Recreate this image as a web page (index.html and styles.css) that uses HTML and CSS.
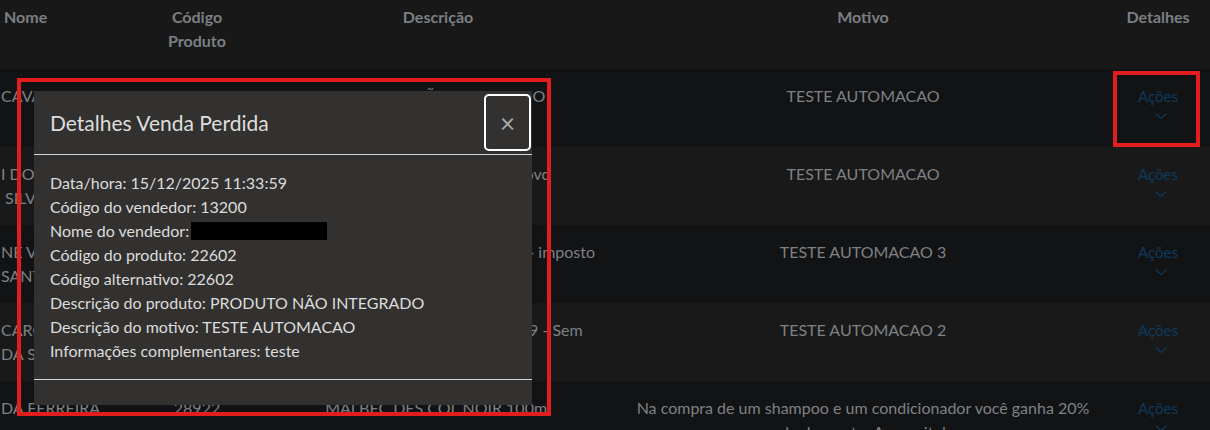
FILE: index.html
```html
<!DOCTYPE html>
<html lang="pt-BR">
<head>
<meta charset="utf-8">
<title>Vendas Perdidas</title>
<link rel="stylesheet" href="styles.css">
</head>
<body>
<table class="grid">
  <colgroup>
    <col class="c-nome"><col class="c-cod"><col class="c-desc"><col class="c-mot"><col class="c-det">
  </colgroup>
  <thead>
    <tr>
      <th class="th-nome">Nome</th>
      <th>Código<br>Produto</th>
      <th>Descrição</th>
      <th>Motivo</th>
      <th>Detalhes</th>
    </tr>
  </thead>
  <tbody>
    <tr class="odd">
      <td class="nome">CAVALHERI</td>
      <td>22602</td>
      <td>PRODUTO NÃO INTEGRADO</td>
      <td>TESTE AUTOMACAO</td>
      <td class="det"><span class="acoes">Ações<svg class="chev" viewBox="0 0 12 6" width="12" height="6"><path d="M0.5 0.5 L6 5.5 L11.5 0.5"/></svg></span></td>
    </tr>
    <tr class="even">
      <td class="nome">I DOS SANTOS<br>&nbsp;SILVA</td>
      <td>22603</td>
      <td>SHAMPOO TESTE 300ML novo</td>
      <td>TESTE AUTOMACAO</td>
      <td class="det"><span class="acoes">Ações<svg class="chev" viewBox="0 0 12 6" width="12" height="6"><path d="M0.5 0.5 L6 5.5 L11.5 0.5"/></svg></span></td>
    </tr>
    <tr class="odd">
      <td class="nome">NE VIEIRA<br>SANTOS</td>
      <td>23110</td>
      <td>PRODUTO TESTE TRIBUTADO ST - imposto</td>
      <td>TESTE AUTOMACAO 3</td>
      <td class="det"><span class="acoes">Ações<svg class="chev" viewBox="0 0 12 6" width="12" height="6"><path d="M0.5 0.5 L6 5.5 L11.5 0.5"/></svg></span></td>
    </tr>
    <tr class="even">
      <td class="nome">CAROLINA<br>DA SILVA</td>
      <td>24019</td>
      <td>KIT PROMOCIONAL VERÃO 2019 - Sem disponibilidade</td>
      <td>TESTE AUTOMACAO 2</td>
      <td class="det"><span class="acoes">Ações<svg class="chev" viewBox="0 0 12 6" width="12" height="6"><path d="M0.5 0.5 L6 5.5 L11.5 0.5"/></svg></span></td>
    </tr>
    <tr class="odd">
      <td class="nome">DA FERREIRA</td>
      <td>28922</td>
      <td>MALBEC DES COL NOIR 100ml</td>
      <td>Na compra de um shampoo e um condicionador você ganha 20% de desconto. Aproveite!</td>
      <td class="det"><span class="acoes">Ações<svg class="chev" viewBox="0 0 12 6" width="12" height="6"><path d="M0.5 0.5 L6 5.5 L11.5 0.5"/></svg></span></td>
    </tr>
  </tbody>
</table>

<div class="modal">
  <div class="modal-head">
    <h2 class="modal-title">Detalhes Venda Perdida</h2>
    <button class="close" type="button" aria-label="Fechar">×</button>
  </div>
  <div class="modal-body">
    <div>Data/hora: 15/12/2025 11:33:59</div>
    <div>Código do vendedor: 13200</div>
    <div>Nome do vendedor:<span class="redact"></span></div>
    <div>Código do produto: 22602</div>
    <div>Código alternativo: 22602</div>
    <div>Descrição do produto: PRODUTO NÃO INTEGRADO</div>
    <div>Descrição do motivo: TESTE AUTOMACAO</div>
    <div>Informações complementares: teste</div>
  </div>
  <div class="modal-foot"></div>
</div>

<div class="mark mark-modal"></div>
<div class="mark mark-acoes"></div>
</body>
</html>
```

FILE: styles.css
```css
* { box-sizing: border-box; }

html, body {
  margin: 0;
  height: 430px;
  overflow: hidden;
  background: #121315;
  font-family: Lato, "Noto Sans", sans-serif;
}

.grid {
  width: 1210px;
  border-collapse: collapse;
  table-layout: fixed;
}

.c-nome { width: 138px; }
.c-cod { width: 118px; }
.c-desc { width: 364px; }
.c-mot { width: 486px; }
.c-det { width: 104px; }

.grid th {
  background: #181818;
  color: #7b7f83;
  font-size: 16px;
  font-weight: 700;
  line-height: 24px;
  padding: 5px 8px 16px;
  text-align: center;
  vertical-align: top;
}

.grid .th-nome {
  text-align: left;
  padding-left: 4px;
}

.grid td {
  height: 78px;
  padding: 15px 8px 0;
  color: #7e8184;
  font-size: 16px;
  line-height: 24px;
  text-align: center;
  vertical-align: top;
}

.grid tr.odd td { background: #121315; }
.grid tr.even td { background: #19191a; }

.grid td.nome {
  text-align: left;
  padding-left: 1px;
  white-space: nowrap;
  overflow: hidden;
}

.acoes {
  display: inline-flex;
  flex-direction: column;
  align-items: center;
  color: #0e3a5d;
  font-size: 15px;
}

.chev {
  margin-top: 5px;
  margin-left: 6px;
  fill: none;
  stroke: #0e3a5d;
  stroke-width: 1.2;
}

.modal {
  position: absolute;
  left: 34px;
  top: 91px;
  width: 498px;
  height: 314px;
  background: #32312f;
  display: flex;
  flex-direction: column;
  color: #dcdcdc;
}

.modal-head {
  height: 64px;
  display: flex;
  align-items: flex-start;
  justify-content: space-between;
  padding-left: 16px;
  border-bottom: 1px solid #d4d4d4;
}

.modal-title {
  margin: 0;
  font-size: 21px;
  font-weight: 400;
  line-height: 64px;
  color: #dedede;
}

.close {
  width: 47px;
  height: 57px;
  margin-top: 3px;
  margin-right: 1px;
  border: 2px solid #ffffff;
  border-radius: 5px;
  background: transparent;
  color: #a9a9a9;
  font-size: 26px;
  font-family: Lato, "Noto Sans", sans-serif;
  line-height: 1;
  padding: 0;
}

.modal-body {
  padding: 16px;
  font-size: 16px;
  line-height: 24px;
  border-bottom: 1px solid #d4d4d4;
}

.redact {
  display: inline-block;
  width: 136px;
  height: 18px;
  background: #000;
  vertical-align: -3px;
  margin-left: 2px;
}

.modal-foot { flex: 1; }

.mark {
  position: absolute;
  border: 4px solid #e11d1d;
}

.mark-modal {
  left: 17px;
  top: 78px;
  width: 534px;
  height: 338px;
}

.mark-acoes {
  left: 1113px;
  top: 71px;
  width: 87px;
  height: 76px;
}
```
